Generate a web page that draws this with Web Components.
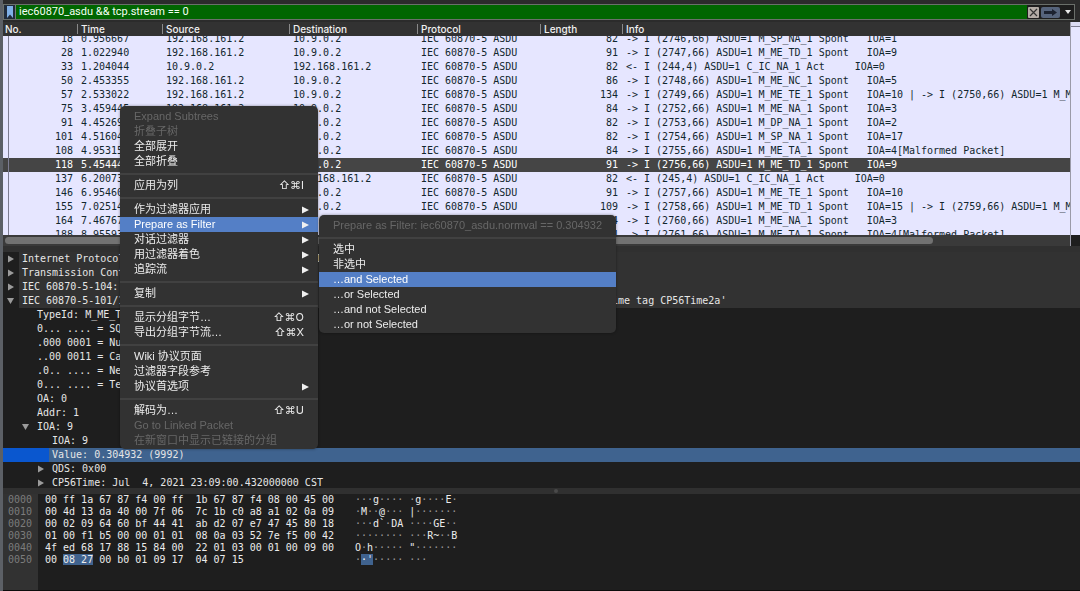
<!DOCTYPE html>
<html lang="zh-CN">
<head>
<meta charset="utf-8">
<title>Packet analyzer</title>
<style>
html, body { height: 100%; margin: 0; background: #1e1e1e; }
body { overflow: hidden; }
</style>
</head>
<body>
<packet-app></packet-app>
<script>
const define = (name, html, setup) => {
  const tpl = document.createElement('template');
  tpl.innerHTML = html;
  customElements.define(name, class extends HTMLElement {
    constructor() {
      super();
      this.attachShadow({ mode: 'open' }).append(tpl.content.cloneNode(true));
    }
    connectedCallback() { if (setup) setup.call(this, this.shadowRoot); }
  });
};
const esc = s => s.replace(/&/g, '&amp;').replace(/</g, '&lt;').replace(/>/g, '&gt;');

/* ---------- display filter ---------- */
define('filter-bar', `
<style>
:host { display: block; padding: 4px 5px 2px 0; background: #2b2b2b; }
form { display: flex; align-items: center; height: 14px; margin: 0; border: 1px solid #6a6f6a; background: #1d1d1d; }
button { display: flex; align-items: center; justify-content: center; padding: 0; border: 0; background: none; }
.mark { width: 12px; height: 14px; background: #202b3c; border-right: 1px solid #777; }
input { flex: 1; min-width: 0; height: 14px; box-sizing: border-box; margin: 0 1px 0 0; border: 0; padding: 0 3px; background: #006600; color: #f4fff4; font: 11px/14px Roboto, sans-serif; outline: 0; }
.clear { width: 11px; height: 11px; background: #b3aca6; margin-right: 2px; border-radius: 1px; }
.apply { width: 19px; height: 11px; background: #56647c; border-radius: 2px; margin-right: 2px; }
.drop { width: 12px; height: 14px; }
</style>
<form onsubmit="return false">
<button class="mark" type="button" aria-label="Bookmarks"><svg width="8" height="12" viewBox="0 0 8 12"><path d="M1 0h6v12L4 8.500 1 12z" fill="#7fb0e8"/></svg></button>
<input aria-label="Display filter" value="iec60870_asdu &amp;&amp; tcp.stream == 0" spellcheck="false">
<button class="clear" type="button" aria-label="Clear"><svg width="9" height="9" viewBox="0 0 9 9"><path d="M1 1l7 7M8 1L1 8" stroke="#333" stroke-width="1.200"/></svg></button>
<button class="apply" type="submit" aria-label="Apply"><svg width="13" height="7" viewBox="0 0 13 7"><path d="M0 2h8V0l5 3.500L8 7V5H0z" fill="#1c2230"/></svg></button>
<button class="drop" type="button" aria-label="Recent filters"><svg width="6" height="4" viewBox="0 0 6 4"><path d="M0 0h6L3 4z" fill="#e8e8e8"/></svg></button>
</form>`);

/* ---------- packet list ---------- */
const P = [
 [18,'0.956667',0,82,'-> I (2746,66) ASDU=1 M_SP_NA_1 Spont   IOA=1'],
 [28,'1.022940',0,91,'-> I (2747,66) ASDU=1 M_ME_TD_1 Spont   IOA=9'],
 [33,'1.204044',1,82,'<- I (244,4) ASDU=1 C_IC_NA_1 Act     IOA=0'],
 [50,'2.453355',0,86,'-> I (2748,66) ASDU=1 M_ME_NC_1 Spont   IOA=5'],
 [57,'2.533022',0,134,'-> I (2749,66) ASDU=1 M_ME_TE_1 Spont   IOA=10 | -> I (2750,66) ASDU=1 M_ME_TE_1'],
 [75,'3.459445',0,84,'-> I (2752,66) ASDU=1 M_ME_NA_1 Spont   IOA=3'],
 [91,'4.452695',0,82,'-> I (2753,66) ASDU=1 M_DP_NA_1 Spont   IOA=2'],
 [101,'4.516041',0,82,'-> I (2754,66) ASDU=1 M_SP_NA_1 Spont   IOA=17'],
 [108,'4.953151',0,84,'-> I (2755,66) ASDU=1 M_ME_TA_1 Spont   IOA=4[Malformed Packet]'],
 [118,'5.454441',0,91,'-> I (2756,66) ASDU=1 M_ME_TD_1 Spont   IOA=9'],
 [137,'6.200731',1,82,'<- I (245,4) ASDU=1 C_IC_NA_1 Act     IOA=0'],
 [146,'6.954601',0,91,'-> I (2757,66) ASDU=1 M_ME_TE_1 Spont   IOA=10'],
 [155,'7.025141',0,109,'-> I (2758,66) ASDU=1 M_ME_TD_1 Spont   IOA=15 | -> I (2759,66) ASDU=1 M_ME_TD_1'],
 [164,'7.467671',0,84,'-> I (2760,66) ASDU=1 M_ME_NA_1 Spont   IOA=3'],
 [188,'8.955931',0,84,'-> I (2761,66) ASDU=1 M_ME_TA_1 Spont   IOA=4[Malformed Packet]'],
];
define('packet-list', `
<style>
:host { display: grid; grid-template: minmax(0, 1fr) 11px / minmax(0, 1fr) 9px; background: #3a3a3a; }
.view { overflow: hidden; background: #e6e6ff; border-right: 1px solid #9a9aa8; }
table { width: 100%; table-layout: fixed; border-collapse: separate; border-spacing: 0; }
th { position: sticky; top: 0; z-index: 1; height: 14px; padding: 0; background: #323232; color: #f0f0f0; font: 500 10px/14px Inter, sans-serif; text-align: left; }
th span { display: block; height: 10px; line-height: 10px; padding-left: 3px; border-left: 1px solid #8a8a8a; }
th:first-child span { border-left-color: transparent; padding-left: 1px; }
td { height: 14px; padding: 0 4px; font: 10px/14px "DejaVu Sans Mono", monospace; color: #12272e; white-space: pre; overflow: hidden; }
td.n { text-align: right; }
td:first-child { background: linear-gradient(#7d7d92, #7d7d92) 5px 0 / 1px 100% no-repeat; }
tr.on td { background-color: #454545; color: #fff; }
.map { background: #e6e6ff; border-top: 4px solid #dcdcf4; box-shadow: inset 0 1px #7d7d92; }
.bar { grid-column: 1; padding: 2px 0; border-right: 1px solid #9a9aa8; }
.thumb { width: 87%; height: 7px; margin-left: 2px; border-radius: 4px; background: #727272; }
.corner { background: #1e1e1e; }
</style>
<div class="view"><table>
<colgroup><col style="width:74px"><col style="width:85px"><col style="width:127px"><col style="width:128px"><col style="width:123px"><col style="width:82px"><col></colgroup>
<thead><tr>${['No.','Time','Source','Destination','Protocol','Length','Info'].map(h => `<th scope="col"><span>${h}</span></th>`).join('')}</tr></thead>
<tbody>${P.map(r => { const a = '192.168.161.2', b = '10.9.0.2', [s, d] = r[2] ? [b, a] : [a, b];
 return `<tr${r[0] === 118 ? ' class="on"' : ''}><td class="n">${r[0]}</td><td>${r[1]}</td><td>${s}</td><td>${d}</td><td>IEC 60870-5 ASDU</td><td class="n">${r[3]}</td><td>${esc(r[4])}</td></tr>`; }).join('')}</tbody>
</table></div><div class="map"></div><div class="bar"><div class="thumb"></div></div><div class="corner"></div>`,
function (root) {
  const view = root.querySelector('.view');
  new ResizeObserver(() => { view.scrollTop = 4; }).observe(view);
});

/* ---------- protocol tree: [level, state, text, kind] ---------- */
const T = [
 [0,'c','Internet Protocol Version 4, Src: 192.168.161.2, Dst: 10.9.0.2','h'],
 [0,'c','Transmission Control Protocol, Src Port: 2404','h'],
 [0,'c','IEC 60870-5-104: -> I (2756,66)','h'],
 [0,'o',"IEC 60870-5-101/104 ASDU: ASDU=1 M_ME_TD_1 Spont    IOA=9 'measured value, normalized value with time tag CP56Time2a'",'h'],
 [1,'','TypeId: M_ME_TD_1 (34)'],[1,'','0... .... = SQ: False'],[1,'','.000 0001 = NumIx: 1'],
 [1,'','..00 0011 = CauseTx: Spont (3)'],[1,'','.0.. .... = Negative: False'],[1,'','0... .... = Test: False'],
 [1,'','OA: 0'],[1,'','Addr: 1'],[1,'o','IOA: 9'],[2,'','IOA: 9'],
 [2,'','Value: 0.304932 (9992)','s'],[2,'c','QDS: 0x00'],[2,'c','CP56Time: Jul  4, 2021 23:09:00.432000000 CST'],
];
define('tree-row', `
<style>
:host { display: flex; height: 14px; font: 10px/14px "DejaVu Sans Mono", monospace; color: #e6e6e6; white-space: pre; }
.gut { flex: none; width: calc(var(--level, 0) * 15px + 16px); box-sizing: border-box; display: flex; align-items: center; justify-content: flex-end; padding-right: 4px; }
.txt { flex: 1; min-width: 0; overflow: hidden; padding-left: 3px; }
:host([kind=h]) .txt { background: #323232; }
:host([kind=s]) .gut { background: #0a57cf; }
:host([kind=s]) .txt { background: #3f638f; }
svg { display: none; fill: #9b9b9b; }
:host([state=c]) .c, :host([state=o]) .o { display: block; }
</style>
<span class="gut"><svg class="c" width="9" height="8" viewBox="0 0 9 8"><path d="M2 .5v7L8 4z"/></svg><svg class="o" width="9" height="8" viewBox="0 0 9 8"><path d="M1 1h7L4.500 7z"/></svg></span><span class="txt"><slot></slot></span>`,
function () { this.style.setProperty('--level', this.getAttribute('level')); });
define('protocol-tree', `
<style>:host { display: block; border-top: 6px solid #303030; height: 236px; overflow: hidden; background: #1e1e1e; }</style>
${T.map(r => `<tree-row level="${r[0]}" state="${r[1]}" kind="${r[3] || ''}">${esc(r[2])}</tree-row>`).join('')}`);

/* ---------- byte view ---------- */
const H = [
 ['00 ff 1a 67 87 f4 00 ff  1b 67 87 f4 08 00 45 00','···g···· ·g····E·'],
 ['00 4d 13 da 40 00 7f 06  7c 1b c0 a8 a1 02 0a 09','·M··@··· |·······'],
 ['00 02 09 64 60 bf 44 41  ab d2 07 e7 47 45 80 18','···d`·DA ····GE··'],
 ['01 00 f1 b5 00 00 01 01  08 0a 03 52 7e f5 00 42','········ ···R~··B'],
 ['4f ed 68 17 88 15 84 00  22 01 03 00 01 00 09 00','O·h····· "·······'],
 ['00 [08 27] 00 b0 01 09 17  04 07 15',"·[·']····· ···"],
];
const dim = s => s.replace(/·+/g, '<i>$&</i>').replace('[', '<mark>').replace(']', '</mark>');
define('byte-view', `
<style>
:host { display: grid; grid-template-columns: 35px 311px 1fr; grid-template-rows: 6px; grid-auto-rows: 12px; font: 10px/12px "DejaVu Sans Mono", monospace; color: #ececec; background: linear-gradient(90deg, #323232 35px, #1e1e1e 35px); border-bottom: 1px solid #0c0c0c; white-space: pre; }
.split { grid-column: 1 / -1; height: 6px; background: #303030; display: flex; align-items: center; justify-content: center; }
.split::after { content: ""; width: 4px; height: 4px; border-radius: 2px; background: #4a4a4a; margin-left: 28px; }
.o { color: #7c7c7c; padding-left: 5px; }
.h { padding-left: 7px; }
.a { padding-left: 6px; }
i { font-style: normal; color: #9a9a9a; }
mark { background: #40638f; color: inherit; }
mark i { color: #fff; }
</style>
<div class="split"></div>
${H.map((r, n) => `<span class="o">00${n}0</span><span class="h">${dim(r[0])}</span><span class="a">${dim(r[1])}</span>`).join('')}`);

/* ---------- menus ---------- */
define('menu-item', `
<style>
:host { display: block; }
button { display: flex; align-items: center; width: 100%; height: 15px; margin: 0; padding: 0 9px 0 14px; border: 0; background: none; color: #ececec; font: 11px/15px "Liberation Sans", "Noto Sans CJK SC", sans-serif; text-align: left; white-space: nowrap; }
.l { flex: 1; }
:host([disabled]) button { color: #676767; }
:host([active]) button { background: #547fc6; color: #fff; }
.k { font: 11px/15px Inter, "DejaVu Sans", sans-serif; padding-right: 5px; }
svg { display: none; fill: #f0f0f0; }
:host([sub]) svg { display: block; }
</style>
<button type="button" role="menuitem"><span class="l"><slot></slot></span><span class="k"><slot name="key"></slot></span><svg width="7" height="8" viewBox="0 0 7 8"><path d="M0 .5v7L7 4z"/></svg></button>`,
function (root) {
  if (this.hasAttribute('disabled')) root.querySelector('button').disabled = true;
  if (this.hasAttribute('sub')) root.querySelector('.k').remove();
});
define('menu-rule', `<style>:host { display: block; box-sizing: border-box; height: 9px; padding-top: 4px; } hr { margin: 0; border: 0; height: 2px; background: #414141; }</style><hr>`);
define('context-menu', `
<style>:host { display: block; box-sizing: border-box; padding: 3px 0 1px; border-radius: 5px; background: #323232; box-shadow: 0 0 3px #0006; }</style>
<div role="menu"><slot></slot></div>`);

define('packet-app', `
<style>
:host { display: grid; grid-template-rows: 22px minmax(0, 1fr) auto 103px; height: 100vh; box-sizing: border-box; border-left: 3px solid #5c6066; position: relative; overflow: hidden; background: #1e1e1e; }
context-menu { position: absolute; z-index: 5; }
.main { left: 117px; top: 106px; width: 198px; }
.sub { left: 316px; top: 215px; width: 297px; }
</style>
<filter-bar></filter-bar><packet-list></packet-list><protocol-tree></protocol-tree><byte-view></byte-view>
<context-menu class="main">
<menu-item disabled>Expand Subtrees</menu-item><menu-item disabled>折叠子树</menu-item><menu-item>全部展开</menu-item><menu-item>全部折叠</menu-item>
<menu-rule></menu-rule><menu-item>应用为列<span slot="key">⇧⌘I</span></menu-item>
<menu-rule></menu-rule><menu-item sub>作为过滤器应用</menu-item><menu-item sub active>Prepare as Filter</menu-item><menu-item sub>对话过滤器</menu-item><menu-item sub>用过滤器着色</menu-item><menu-item sub>追踪流</menu-item>
<menu-rule></menu-rule><menu-item sub>复制</menu-item>
<menu-rule></menu-rule><menu-item>显示分组字节…<span slot="key">⇧⌘O</span></menu-item><menu-item>导出分组字节流…<span slot="key">⇧⌘X</span></menu-item>
<menu-rule></menu-rule><menu-item>Wiki 协议页面</menu-item><menu-item>过滤器字段参考</menu-item><menu-item sub>协议首选项</menu-item>
<menu-rule></menu-rule><menu-item>解码为…<span slot="key">⇧⌘U</span></menu-item><menu-item disabled>Go to Linked Packet</menu-item><menu-item disabled>在新窗口中显示已链接的分组</menu-item>
</context-menu>
<context-menu class="sub">
<menu-item disabled>Prepare as Filter: iec60870_asdu.normval == 0.304932</menu-item>
<menu-rule></menu-rule><menu-item>选中</menu-item><menu-item>非选中</menu-item><menu-item active>…and Selected</menu-item><menu-item>…or Selected</menu-item><menu-item>…and not Selected</menu-item><menu-item>…or not Selected</menu-item>
</context-menu>`);
</script>
</body>
</html>
